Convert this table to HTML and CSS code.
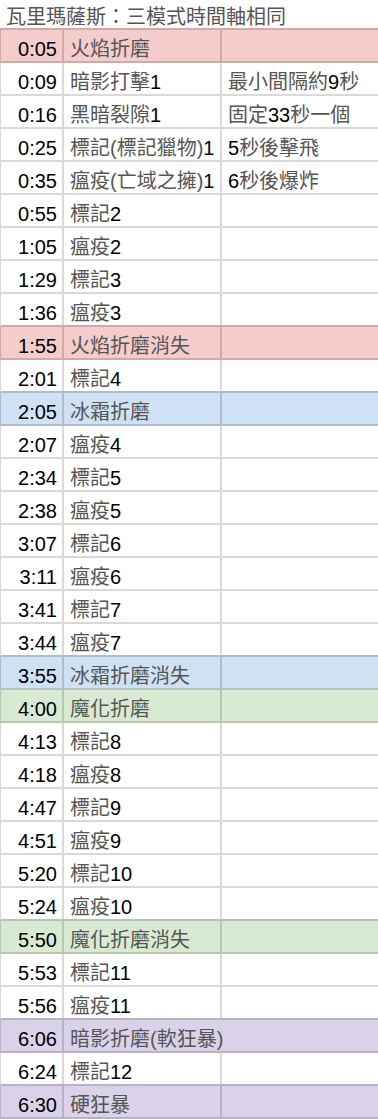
FILE: index.html
```html
<!DOCTYPE html>
<html lang="zh-Hant">
<head>
<meta charset="utf-8">
<title>瓦里瑪薩斯</title>
<link rel="stylesheet" href="styles.css">
</head>
<body>
<div class="sheet">
  <div class="title"><span class="k">瓦里瑪薩斯：三模式時間軸相同</span></div>
  <div class="row red"><div class="c t">0:05</div><div class="c n"><span class="k">火焰折磨</span></div><div class="c d"></div></div>
  <div class="row"><div class="c t">0:09</div><div class="c n"><span class="k">暗影打擊</span>1</div><div class="c d"><span class="k">最小間隔約</span>9<span class="k">秒</span></div></div>
  <div class="row"><div class="c t">0:16</div><div class="c n"><span class="k">黑暗裂隙</span>1</div><div class="c d"><span class="k">固定</span>33<span class="k">秒一個</span></div></div>
  <div class="row"><div class="c t">0:25</div><div class="c n"><span class="k">標記(標記獵物)</span>1</div><div class="c d">5<span class="k">秒後擊飛</span></div></div>
  <div class="row"><div class="c t">0:35</div><div class="c n"><span class="k">瘟疫(亡域之擁)</span>1</div><div class="c d">6<span class="k">秒後爆炸</span></div></div>
  <div class="row"><div class="c t">0:55</div><div class="c n"><span class="k">標記</span>2</div><div class="c d"></div></div>
  <div class="row"><div class="c t">1:05</div><div class="c n"><span class="k">瘟疫</span>2</div><div class="c d"></div></div>
  <div class="row"><div class="c t">1:29</div><div class="c n"><span class="k">標記</span>3</div><div class="c d"></div></div>
  <div class="row"><div class="c t">1:36</div><div class="c n"><span class="k">瘟疫</span>3</div><div class="c d"></div></div>
  <div class="row red"><div class="c t">1:55</div><div class="c n"><span class="k">火焰折磨消失</span></div><div class="c d"></div></div>
  <div class="row"><div class="c t">2:01</div><div class="c n"><span class="k">標記</span>4</div><div class="c d"></div></div>
  <div class="row blue"><div class="c t">2:05</div><div class="c n"><span class="k">冰霜折磨</span></div><div class="c d"></div></div>
  <div class="row"><div class="c t">2:07</div><div class="c n"><span class="k">瘟疫</span>4</div><div class="c d"></div></div>
  <div class="row"><div class="c t">2:34</div><div class="c n"><span class="k">標記</span>5</div><div class="c d"></div></div>
  <div class="row"><div class="c t">2:38</div><div class="c n"><span class="k">瘟疫</span>5</div><div class="c d"></div></div>
  <div class="row"><div class="c t">3:07</div><div class="c n"><span class="k">標記</span>6</div><div class="c d"></div></div>
  <div class="row"><div class="c t">3:11</div><div class="c n"><span class="k">瘟疫</span>6</div><div class="c d"></div></div>
  <div class="row"><div class="c t">3:41</div><div class="c n"><span class="k">標記</span>7</div><div class="c d"></div></div>
  <div class="row"><div class="c t">3:44</div><div class="c n"><span class="k">瘟疫</span>7</div><div class="c d"></div></div>
  <div class="row blue"><div class="c t">3:55</div><div class="c n"><span class="k">冰霜折磨消失</span></div><div class="c d"></div></div>
  <div class="row green"><div class="c t">4:00</div><div class="c n"><span class="k">魔化折磨</span></div><div class="c d"></div></div>
  <div class="row"><div class="c t">4:13</div><div class="c n"><span class="k">標記</span>8</div><div class="c d"></div></div>
  <div class="row"><div class="c t">4:18</div><div class="c n"><span class="k">瘟疫</span>8</div><div class="c d"></div></div>
  <div class="row"><div class="c t">4:47</div><div class="c n"><span class="k">標記</span>9</div><div class="c d"></div></div>
  <div class="row"><div class="c t">4:51</div><div class="c n"><span class="k">瘟疫</span>9</div><div class="c d"></div></div>
  <div class="row"><div class="c t">5:20</div><div class="c n"><span class="k">標記</span>10</div><div class="c d"></div></div>
  <div class="row"><div class="c t">5:24</div><div class="c n"><span class="k">瘟疫</span>10</div><div class="c d"></div></div>
  <div class="row green"><div class="c t">5:50</div><div class="c n"><span class="k">魔化折磨消失</span></div><div class="c d"></div></div>
  <div class="row"><div class="c t">5:53</div><div class="c n"><span class="k">標記</span>11</div><div class="c d"></div></div>
  <div class="row"><div class="c t">5:56</div><div class="c n"><span class="k">瘟疫</span>11</div><div class="c d"></div></div>
  <div class="row purple"><div class="c t">6:06</div><div class="c n wide"><span class="k">暗影折磨(軟狂暴)</span></div></div>
  <div class="row"><div class="c t">6:24</div><div class="c n"><span class="k">標記</span>12</div><div class="c d"></div></div>
  <div class="row purple"><div class="c t">6:30</div><div class="c n"><span class="k">硬狂暴</span></div><div class="c d"></div></div>
</div>
</body>
</html>
```
FILE: styles.css
```css
* { box-sizing: border-box; }
html, body { margin: 0; padding: 0; background: #ffffff; }
body {
  font-family: "Liberation Sans", "Noto Sans CJK TC", sans-serif;
  font-size: 20px;
  color: #000000;
}
.sheet { width: 378px; overflow: hidden; }
.k { color: #555555; }
.title {
  height: 28px;
  padding-left: 6px;
  display: flex;
  align-items: flex-end;
  line-height: 20px;
  padding-bottom: 1px;
  white-space: nowrap;
}
.row {
  --line: #d9d9d9;
  display: grid;
  grid-template-columns: 63px 158px 1fr;
  height: 33px;
  border-bottom: 2px solid var(--line);
  border-left: 1px solid var(--line);
  background: #ffffff;
}
.title + .row { border-top: 2px solid var(--line); height: 35px; }
.c {
  display: flex;
  align-items: flex-end;
  line-height: 20px;
  padding-bottom: 2px;
  border-right: 2px solid var(--line);
  white-space: nowrap;
  overflow: visible;
}
.t { justify-content: flex-end; padding-right: 5px; }
.n { padding-left: 6px; }
.d { padding-left: 6px; border-right: none; }
.wide { grid-column: span 2; border-right: none; }

.red { background: #f4cccc; --line: #d5a7a7; }
.blue { background: #cfe2f3; --line: #adbdce; }
.green { background: #d9ead3; --line: #b7c7b1; }
.purple { background: #d9d2e9; --line: #b8b1c8; }

.row:has(+ .red) { border-bottom-color: #d5a7a7; }
.row:has(+ .blue) { border-bottom-color: #adbdce; }
.row:has(+ .green) { border-bottom-color: #b6c2bf; }
.row:has(+ .purple) { border-bottom-color: #b8b1c8; }
.title:has(+ .red) + .row { border-top-color: #d5a7a7; }
```
